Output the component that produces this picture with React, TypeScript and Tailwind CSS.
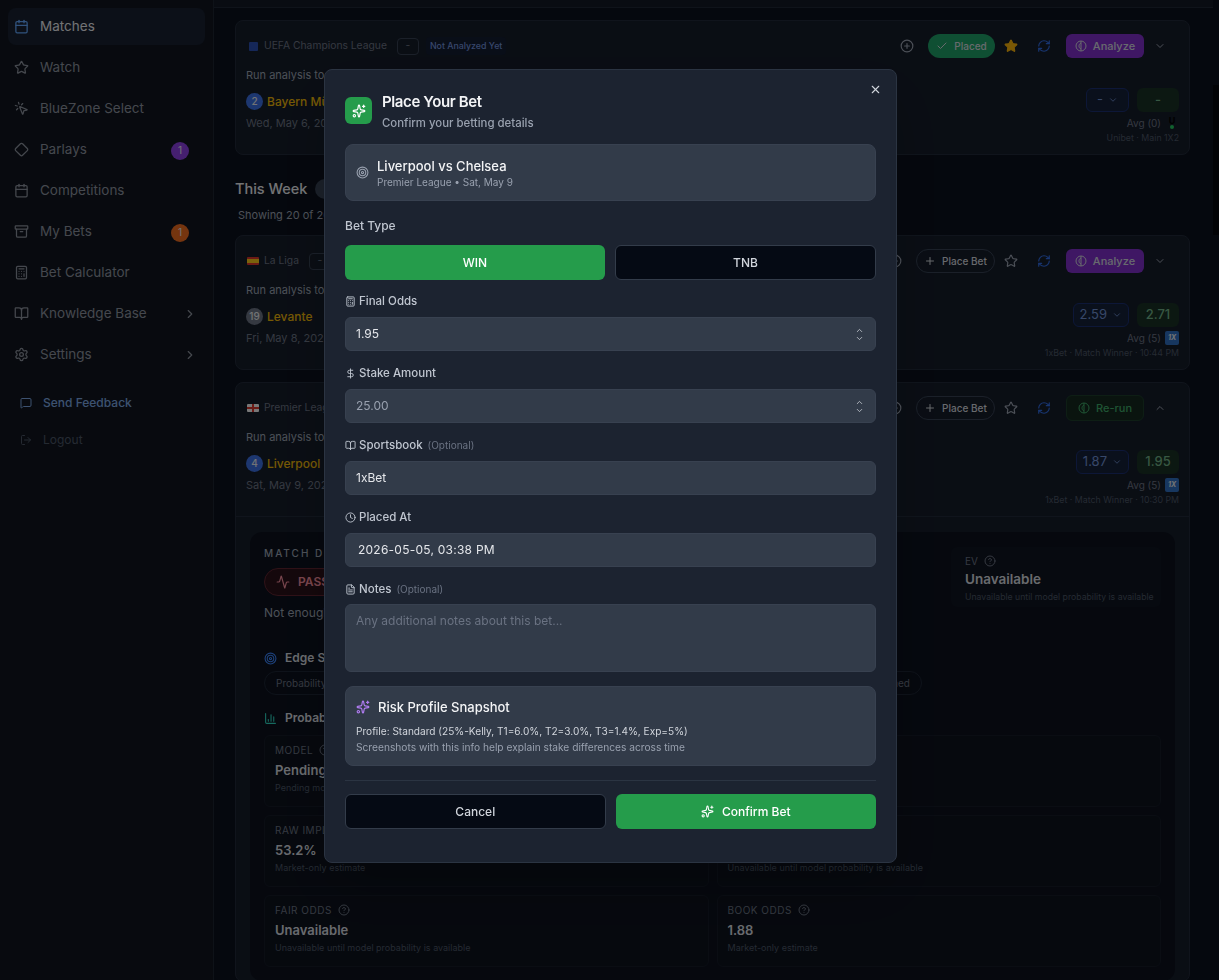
import {
  Activity,
  Archive,
  BarChart3,
  BookOpen,
  Calculator,
  Calendar,
  Check,
  ChevronDown,
  ChevronRight,
  ChevronUp,
  CircleHelp,
  CirclePlus,
  Clock,
  DollarSign,
  Diamond,
  FileText,
  LogOut,
  MessageSquare,
  MousePointerClick,
  Plus,
  RefreshCw,
  Settings,
  Sparkles,
  Star,
  Target,
  X,
} from "lucide-react";

const navItems = [
  { label: "Matches", icon: Calendar, active: true },
  { label: "Watch", icon: Star },
  { label: "BlueZone Select", icon: MousePointerClick },
  { label: "Parlays", icon: Diamond, badge: "1", badgeClass: "bg-[#8b3fe0]" },
  { label: "Competitions", icon: Calendar },
  { label: "My Bets", icon: Archive, badge: "1", badgeClass: "bg-[#ea6a1f]" },
  { label: "Bet Calculator", icon: Calculator },
  { label: "Knowledge Base", icon: BookOpen, arrow: true },
  { label: "Settings", icon: Settings, arrow: true },
];

function AnalyzeIcon({ className }: { className?: string }) {
  return (
    <svg viewBox="0 0 24 24" fill="none" stroke="currentColor" strokeWidth="2" className={className}>
      <circle cx="12" cy="12" r="10" />
      <path d="M12 2v20" />
      <path d="M12 6c-3 1-4 4-4 6s1 5 4 6" />
    </svg>
  );
}

function Flag({ kind }: { kind: "eu" | "es" | "en" }) {
  if (kind === "eu") return <span className="h-[9px] w-[9px] rounded-[1px] bg-[#2a4fb0]" />;
  if (kind === "es")
    return (
      <svg viewBox="0 0 12 8" className="h-2 w-3">
        <rect width="12" height="8" rx="1" fill="#d9342b" />
        <rect y="2" width="12" height="4" fill="#f5c518" />
      </svg>
    );
  return (
    <svg viewBox="0 0 12 8" className="h-2 w-3">
      <rect width="12" height="8" rx="1" fill="#f1f1f1" />
      <rect x="5" width="2" height="8" fill="#d9342b" />
      <rect y="3" width="12" height="2" fill="#d9342b" />
    </svg>
  );
}

function MatchCard({
  flag,
  league,
  tag,
  rank,
  rankClass,
  team,
  date,
  avg,
  odds,
  best,
  source,
  placed,
  rerun,
  expanded,
}: {
  flag: "eu" | "es" | "en";
  league: string;
  tag?: string;
  rank: string;
  rankClass: string;
  team: string;
  date: string;
  avg: string;
  odds: string;
  best: string;
  source: string;
  placed?: boolean;
  rerun?: boolean;
  expanded?: boolean;
}) {
  return (
    <div className="h-[133px] shrink-0 px-[10px] pt-[13px]">
      <div className="flex h-6 items-center justify-between">
        <div className="flex items-center gap-1 pl-[1px] text-[10.3px] text-gray-500">
          <span className="flex w-3 justify-center">
            <Flag kind={flag} />
          </span>
          <span className="ml-[1px]">{league}</span>
          {tag && (
            <span className="ml-[6px] flex h-[17px] w-[22px] items-center justify-center rounded border border-gray-700">-</span>
          )}
          {tag && tag.trim() && (
            <span className="ml-[3px] rounded bg-[#131c30] px-[4px] py-[2px] text-[8.8px] font-medium text-[#6f8fd8]">{tag}</span>
          )}
        </div>
        <div className="flex items-center">
          <CirclePlus className="mr-[14px] h-[14px] w-[14px] text-gray-400" />
          {placed ? (
            <span className="flex h-6 w-[67px] items-center justify-center gap-[6px] rounded-full bg-[#1f9e66] text-[10px] font-medium text-gray-300">
              <Check className="h-3 w-3" />
              Placed
            </span>
          ) : (
            <span className="flex h-6 w-[79px] items-center justify-center gap-[6px] rounded-full border border-gray-700 text-[10px] font-medium text-gray-300">
              <Plus className="h-3 w-3" />
              Place Bet
            </span>
          )}
          <Star
            className={`ml-[9px] h-[14px] w-[14px] ${placed ? "fill-[#f5b00b] text-[#f5b00b]" : "text-gray-400"}`}
          />
          <RefreshCw className="ml-[19px] h-[14px] w-[14px] text-[#2f6ae0]" />
          {rerun ? (
            <span className="ml-[15px] flex h-[26px] w-[78px] items-center justify-center gap-[6px] rounded-md border border-[#1c3d2a] bg-[#14291f] text-[11px] font-medium text-[#3fa868]">
              <AnalyzeIcon className="h-3 w-3" />
              Re-run
            </span>
          ) : (
            <span className="ml-[15px] flex h-6 w-[78px] items-center justify-center gap-[6px] rounded-md bg-[#7e2fc9] text-[11px] font-medium text-gray-300">
              <AnalyzeIcon className="h-3 w-3" />
              Analyze
            </span>
          )}
          {expanded ? (
            <ChevronUp className="ml-[10px] mr-[13px] h-3 w-3 text-gray-400" />
          ) : (
            <ChevronDown className="ml-[10px] mr-[13px] h-3 w-3 text-gray-400" />
          )}
        </div>
      </div>
      <div className="flex justify-between">
        <div className="pt-[9px]">
          <div className="text-[11px] leading-4 text-gray-400">Run analysis to get insights</div>
          <div className="mt-[10px] flex items-center gap-1 text-xs font-medium text-[#eab308]">
            <span className={`flex h-[17px] w-[17px] items-center justify-center rounded-full text-[10px] text-gray-200 ${rankClass}`}>
              {rank}
            </span>
            {team}
          </div>
          <div className="mt-[5px] text-[11px] leading-4 text-gray-500">{date}</div>
        </div>
        <div className="flex flex-col items-end pt-[30px]">
          <div className="flex gap-2">
            <span className="flex h-6 min-w-[43px] items-center justify-center gap-[5px] rounded-md border border-[#1a2f70] bg-[#142039] px-[6px] text-[13px] text-[#6f8fd0]">
              {odds}
              <ChevronDown className="h-[10px] w-[10px]" />
            </span>
            <span className="flex h-6 w-[42px] items-center justify-center rounded-md bg-[#183024] text-[13px] font-medium text-[#6fae86]">
              {best}
            </span>
          </div>
          <div className="mt-[4px] flex h-[14px] items-center gap-[4px] text-[10px] text-gray-500">
            {avg}
            {odds === "-" ? (
              <span className="relative flex h-[14px] w-[14px] flex-col items-center text-[9px] font-bold leading-[9px] text-black">
                U
                <span className="h-1 w-1 rounded-full bg-[#22c55e]" />
              </span>
            ) : (
              <span className="flex h-[14px] w-[14px] items-center justify-center rounded-[2px] bg-[#2f6fc0] text-[7px] font-bold italic text-gray-200">
                1X
              </span>
            )}
          </div>
          <div className="mt-[2px] text-[8.8px] leading-3 text-gray-600">{source}</div>
        </div>
      </div>
    </div>
  );
}

function Metric({ label, value, note, help }: { label: string; value: string; note: string; help?: boolean }) {
  return (
    <div className="h-[72px] rounded-md border border-[#141a27] bg-[#0d121d] px-[10px] pt-[6px]">
      <div className="flex h-4 items-center gap-[6px] text-[10px] uppercase leading-4 tracking-wider text-gray-500">
        {label}
        {help && <CircleHelp className="h-3 w-3" />}
      </div>
      <div className="mt-[2px] h-5 text-[13px] font-semibold leading-5 text-gray-300">{value}</div>
      <div className="text-[9px] leading-4 text-gray-600">{note}</div>
    </div>
  );
}

function FieldLabel({ icon, label, optional }: { icon: React.ReactNode; label: string; optional?: boolean }) {
  return (
    <label className="flex h-4 items-center gap-[3px] text-[11.5px] font-medium text-[#c0c6d0]">
      {icon}
      <span className="mt-[2px]">{label}</span>
      {optional && <span className="ml-[2px] mt-[1px] text-[10px] font-normal text-gray-500">(Optional)</span>}
    </label>
  );
}

function Field({ value, muted, spinner, inset }: { value: string; muted?: boolean; spinner?: boolean; inset?: boolean }) {
  return (
    <div className="mt-2 flex h-[34px] items-center justify-between rounded-md border border-[#384150] bg-[#323b49] px-[10px]">
      <input
        readOnly
        value={value}
        className={`w-full bg-transparent text-xs outline-none ${muted ? "text-gray-400" : "text-gray-200"} ${
          inset ? "pl-[2px] tracking-[0.02em]" : ""
        }`}
      />
      {spinner && (
        <span className="flex flex-col text-gray-300">
          <ChevronUp className="-mb-[1px] h-[9px] w-[11px]" />
          <ChevronDown className="h-[9px] w-[11px]" />
        </span>
      )}
    </div>
  );
}

export default function App() {
  return (
    <div className="relative flex h-[980px] overflow-hidden bg-[#0b101c] font-['Inter',sans-serif]">
      <aside className="w-[214px] shrink-0 border-r border-[#1c2431] bg-[#10151f]">
        <nav className="px-2 pt-2">
          {navItems.map((item) => (
            <div
              key={item.label}
              className={`mb-1 flex h-[37px] items-center rounded-lg pl-[6px] pr-2 text-[13.5px] ${
                item.active ? "bg-[#182030] text-gray-200" : "text-[#8b919c]"
              }`}
            >
              <item.icon className={`h-[15px] w-[15px] ${item.active ? "text-[#60a5fa]" : ""}`} />
              <span className="ml-[11px] flex-1">{item.label}</span>
              {item.badge && (
                <span
                  className={`mr-2 mt-[2px] flex h-[18px] w-[18px] items-center justify-center rounded-full text-[10px] text-gray-200 ${item.badgeClass}`}
                >
                  {item.badge}
                </span>
              )}
              {item.arrow && <ChevronRight className="h-[14px] w-[14px]" />}
            </div>
          ))}
        </nav>
        <div className="mt-[18px] flex h-6 items-center gap-[11px] pl-[20px] text-xs font-medium text-[#7aa5e0]">
          <MessageSquare className="h-3 w-3" />
          Send Feedback
        </div>
        <div className="mt-[13px] flex h-6 items-center gap-[11px] pl-[20px] text-xs text-gray-600">
          <LogOut className="h-3 w-3" />
          Logout
        </div>
      </aside>

      <main className="min-w-0 flex-1">
        <div className="h-2 border-b border-[#1f2735] bg-[#131925]" />
        <div className="px-[21px] pt-3">
          <div className="w-[955px] rounded-lg border border-[#202938] bg-[#151c29]">
            <MatchCard
              flag="eu"
              league="UEFA Champions League"
              tag="Not Analyzed Yet"
              rank="2"
              rankClass="bg-[#3b6fe0]"
              team="Bayern München"
              date="Wed, May 6, 2026"
              avg="Avg (0)"
              odds="-"
              best="-"
              source="Unibet · Main 1X2"
              placed
            />
          </div>
          <div className="mt-[22px] flex h-[24px] items-center gap-2 text-[14.5px] font-medium text-gray-200">
            This Week
            <span className="h-5 w-10 rounded-full bg-gray-700" />
          </div>
          <div className="mt-[6px] pl-[3px] text-[11px] leading-4 text-gray-400">Showing 20 of 20 matches</div>
          <div className="mt-3 w-[955px] rounded-lg border border-[#202938] bg-[#151c29]">
            <MatchCard
              flag="es"
              league="La Liga"
              tag=" "
              rank="19"
              rankClass="bg-gray-500"
              team="Levante"
              date="Fri, May 8, 2026"
              avg="Avg (5)"
              odds="2.59"
              best="2.71"
              source="1xBet · Match Winner · 10:44 PM"
            />
          </div>
          <div className="mt-3 w-[955px] rounded-lg border border-[#202938] bg-[#151c29]">
            <div className="border-b border-[#202938]">
              <MatchCard
                flag="en"
                league="Premier League"
                rank="4"
                rankClass="bg-[#3b6fe0]"
                team="Liverpool"
                date="Sat, May 9, 2026"
                avg="Avg (5)"
                odds="1.87"
                best="1.95"
                source="1xBet · Match Winner · 10:30 PM"
                rerun
                expanded
              />
            </div>
            <div className="px-[14px] pt-[15px]">
              <div className="rounded-xl bg-[#0c111d] p-[14px] pt-[15px]">
                <div className="flex justify-between">
                  <div>
                    <div className="text-[10px] font-medium uppercase leading-3 tracking-[0.2em] text-gray-400">Match Decision</div>
                    <span className="mt-[9px] flex h-7 w-[96px] items-center gap-2 rounded-full border border-[#5f2430] bg-[#2a1119] pl-[11px] text-xs font-semibold text-[#f08a9a]">
                      <Activity className="h-[14px] w-[14px]" />
                      PASS
                    </span>
                    <div className="mt-[9px] text-xs text-gray-400">Not enough data</div>
                  </div>
                  <div className="h-[60px] w-[210px] rounded-md bg-[#0f1420] pl-[14px] pt-[6px]">
                    <div className="flex items-center gap-[6px] text-[10px] leading-4 text-gray-500">
                      EV
                      <CircleHelp className="h-3 w-3" />
                    </div>
                    <div className="text-[13.5px] font-semibold leading-5 text-gray-300">Unavailable</div>
                    <div className="mt-[2px] text-[8.7px] leading-3 text-gray-600">Unavailable until model probability is available</div>
                  </div>
                </div>
                <div className="mt-[27px] flex h-5 items-center gap-2 text-xs font-semibold text-gray-300">
                  <Target className="h-[13px] w-[13px] text-[#3b82f6]" />
                  Edge Summary
                </div>
                <div className="mt-[3px] flex w-[658px] justify-between">
                  <span className="flex h-6 items-center rounded-full border border-[#1c2534] px-[11px] text-[10px] text-gray-500">Probability</span>
                  <span className="flex h-6 items-center rounded-full border border-[#1c2534] px-[11px] text-[10px] text-gray-500">Unconfirmed</span>
                </div>
                <div className="mt-[13px] flex h-5 items-center gap-2 text-xs font-semibold text-gray-300">
                  <BarChart3 className="h-[13px] w-[13px] text-[#2dd4bf]" />
                  Probabilities
                </div>
                <div className="mt-[7px] grid grid-cols-2 gap-2">
                  <Metric label="Model" value="Pending" note="Pending model" help />
                  <Metric label="" value="" note="" />
                  <Metric label="Raw Implied" value="53.2%" note="Market-only estimate" />
                  <Metric label="" value="" note="Unavailable until model probability is available" />
                  <Metric label="Fair Odds" value="Unavailable" note="Unavailable until model probability is available" help />
                  <Metric label="Book Odds" value="1.88" note="Market-only estimate" help />
                </div>
              </div>
            </div>
          </div>
        </div>
      </main>

      <div className="w-[6px] shrink-0 pt-[85px]">
        <div className="h-[150px] bg-[#05070c]" />
      </div>

      <div className="fixed inset-0 flex items-start justify-center bg-black/50 pl-[2px] pt-[69px] backdrop-blur-[0.7px]">
        <div className="relative h-[794px] w-[573px] rounded-lg border border-[#2b3442] bg-[#1c2330] px-[20px] pt-[27px] shadow-2xl">
          <X className="absolute right-[14px] top-[13px] h-[13px] w-[13px] text-gray-300" />
          <div className="flex items-start gap-[10px]">
            <span className="flex h-[27px] w-[27px] items-center justify-center rounded-md bg-[#259c4b]">
              <Sparkles className="h-[14px] w-[14px] text-white" />
            </span>
            <div className="-mt-[5px]">
              <h2 className="text-[15px] font-semibold leading-5 tracking-tight text-gray-100">Place Your Bet</h2>
              <p className="mt-[3px] text-[11.4px] font-medium leading-4 text-gray-400">Confirm your betting details</p>
            </div>
          </div>

          <div className="mt-[13px] flex h-[57px] items-center gap-[8px] rounded-lg border border-[#384150] bg-[#323b49] px-[10px]">
            <Target className="h-[13px] w-[13px] text-gray-400" />
            <div>
              <div className="text-[13px] font-medium leading-[19px] text-gray-100">Liverpool vs Chelsea</div>
              <div className="text-[10px] leading-3 text-gray-400">Premier League • Sat, May 9</div>
            </div>
          </div>

          <div className="mt-[17px] flex h-4 items-center text-xs font-medium text-[#c0c6d0]">Bet Type</div>
          <div className="mt-[11px] grid grid-cols-[260px_261px] gap-[10px]">
            <button className="h-[35px] rounded-md bg-[#259c4b] text-xs font-medium text-white">WIN</button>
            <button className="h-[35px] rounded-md border border-[#333c4a] bg-[#050a14] text-xs font-medium text-gray-300">TNB</button>
          </div>

          <div className="mt-[13px]">
            <FieldLabel icon={<Calculator className="h-[11px] w-[11px]" />} label="Final Odds" />
            <Field value="1.95" spinner />
          </div>
          <div className="mt-[14px]">
            <FieldLabel icon={<DollarSign className="h-[11px] w-[11px]" />} label="Stake Amount" />
            <Field value="25.00" muted spinner />
          </div>
          <div className="mt-[14px]">
            <FieldLabel icon={<BookOpen className="h-[11px] w-[11px]" />} label="Sportsbook" optional />
            <Field value="1xBet" />
          </div>
          <div className="mt-[14px]">
            <FieldLabel icon={<Clock className="h-[11px] w-[11px]" />} label="Placed At" />
            <Field value="2026-05-05, 03:38 PM" inset />
          </div>
          <div className="mt-[14px]">
            <FieldLabel icon={<FileText className="h-[11px] w-[11px]" />} label="Notes" optional />
            <textarea
              readOnly
              placeholder="Any additional notes about this bet..."
              className="mt-[7px] block h-[68px] w-full resize-none rounded-md border border-[#384150] bg-[#323b49] px-[10px] py-[8px] text-xs text-gray-100 outline-none placeholder:text-gray-500"
            />
          </div>

          <div className="mt-[14px] h-[80px] rounded-lg border border-[#384150] bg-[#323b49] px-[10px] pt-[12px]">
            <div className="flex items-center gap-2 text-[13px] font-medium leading-4 text-gray-100">
              <Sparkles className="h-[14px] w-[14px] text-[#b07cf0]" />
              Risk Profile Snapshot
            </div>
            <div className="mt-[8px] text-[10.1px] leading-4 text-gray-300">Profile: Standard (25%-Kelly, T1=6.0%, T2=3.0%, T3=1.4%, Exp=5%)</div>
            <div className="text-[10.2px] leading-4 text-gray-400">Screenshots with this info help explain stake differences across time</div>
          </div>

          <div className="mt-[14px] grid grid-cols-2 gap-[10px] border-t border-[#2b3442] pt-[13px]">
            <button className="h-[35px] rounded-md border border-[#333c4a] bg-[#050a14] text-xs font-medium text-gray-300">Cancel</button>
            <button className="flex h-[35px] items-center justify-center gap-2 rounded-md bg-[#259c4b] text-xs font-medium text-white">
              <Sparkles className="h-[13px] w-[13px]" />
              Confirm Bet
            </button>
          </div>
        </div>
      </div>
    </div>
  );
}
